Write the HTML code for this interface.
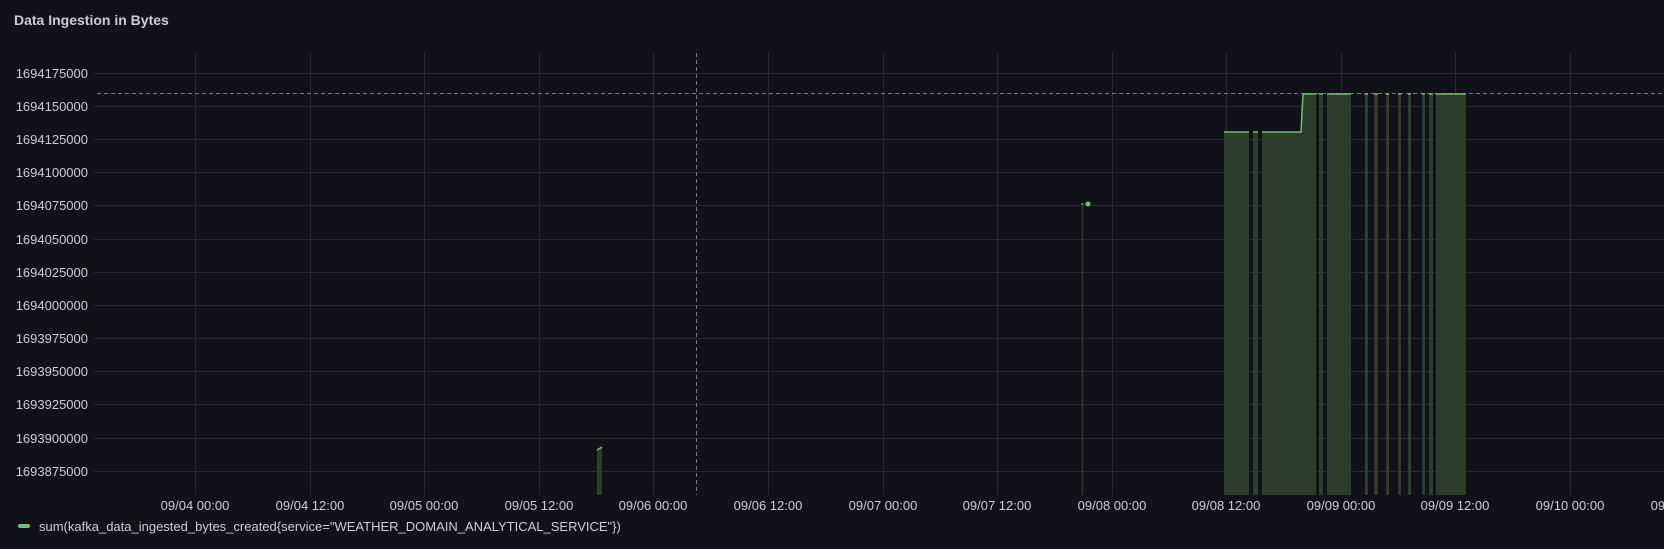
<!DOCTYPE html>
<html><head><style>
body{margin:0;background:#111217;width:1664px;height:549px;overflow:hidden;font-family:"Liberation Sans",sans-serif;}
</style></head><body>
<svg width="1664" height="549" xmlns="http://www.w3.org/2000/svg" style="position:absolute;left:0;top:0">
<text x="14" y="25" fill="#ccccdc" font-size="14" font-weight="bold">Data Ingestion in Bytes</text>
<g stroke="#2a2b30" stroke-width="1">
<line x1="94" x2="1664" y1="73.5" y2="73.5"/><line x1="94" x2="1664" y1="106.5" y2="106.5"/>
<line x1="94" x2="1664" y1="139.5" y2="139.5"/><line x1="94" x2="1664" y1="172.5" y2="172.5"/>
<line x1="94" x2="1664" y1="205.5" y2="205.5"/><line x1="94" x2="1664" y1="239.5" y2="239.5"/>
<line x1="94" x2="1664" y1="272.5" y2="272.5"/><line x1="94" x2="1664" y1="305.5" y2="305.5"/>
<line x1="94" x2="1664" y1="338.5" y2="338.5"/><line x1="94" x2="1664" y1="371.5" y2="371.5"/>
<line x1="94" x2="1664" y1="404.5" y2="404.5"/><line x1="94" x2="1664" y1="438.5" y2="438.5"/>
<line x1="94" x2="1664" y1="471.5" y2="471.5"/>
<line x1="195.5" x2="195.5" y1="53" y2="495"/><line x1="310.5" x2="310.5" y1="53" y2="495"/>
<line x1="424.5" x2="424.5" y1="53" y2="495"/><line x1="539.5" x2="539.5" y1="53" y2="495"/>
<line x1="653.5" x2="653.5" y1="53" y2="495"/><line x1="768.5" x2="768.5" y1="53" y2="495"/>
<line x1="883.5" x2="883.5" y1="53" y2="495"/><line x1="997.5" x2="997.5" y1="53" y2="495"/>
<line x1="1112.5" x2="1112.5" y1="53" y2="495"/><line x1="1226.5" x2="1226.5" y1="53" y2="495"/>
<line x1="1341.5" x2="1341.5" y1="53" y2="495"/><line x1="1455.5" x2="1455.5" y1="53" y2="495"/>
<line x1="1570.5" x2="1570.5" y1="53" y2="495"/>
</g>
<line x1="97" x2="1664" y1="93.5" y2="93.5" stroke="#6e7a90" stroke-dasharray="4,3"/>
<line x1="696.5" x2="696.5" y1="53" y2="495" stroke="#6e7a90" stroke-dasharray="4,3"/>
<g fill="#ccccdc" font-size="13" text-anchor="end">
<text x="88" y="78">1694175000</text><text x="88" y="111">1694150000</text><text x="88" y="144">1694125000</text>
<text x="88" y="177">1694100000</text><text x="88" y="210">1694075000</text><text x="88" y="244">1694050000</text>
<text x="88" y="277">1694025000</text><text x="88" y="310">1694000000</text><text x="88" y="343">1693975000</text>
<text x="88" y="376">1693950000</text><text x="88" y="409">1693925000</text><text x="88" y="443">1693900000</text>
<text x="88" y="476">1693875000</text>
</g>
<g fill="#ccccdc" font-size="13" text-anchor="middle">
<text x="195" y="510">09/04 00:00</text><text x="310" y="510">09/04 12:00</text><text x="424" y="510">09/05 00:00</text>
<text x="539" y="510">09/05 12:00</text><text x="653" y="510">09/06 00:00</text><text x="768" y="510">09/06 12:00</text>
<text x="883" y="510">09/07 00:00</text><text x="997" y="510">09/07 12:00</text><text x="1112" y="510">09/08 00:00</text>
<text x="1226" y="510">09/08 12:00</text><text x="1341" y="510">09/09 00:00</text><text x="1455" y="510">09/09 12:00</text>
<text x="1570" y="510">09/10 00:00</text><text x="1685" y="510">09/10 12:00</text>
</g>
<g fill="#2c3d2b">
<path d="M597 495V450L602 447V495Z"/>
<path d="M1224 495V132H1249V495Z"/>
<path d="M1253 495V132H1258V495Z"/>
<path d="M1262 495V132H1301L1303 94H1316V495Z"/>
<path d="M1319 495V94H1323V495Z"/>
<path d="M1327 495V94H1351V495Z"/>
<path d="M1365 495V94H1368V495Z"/>
<path d="M1374 495V94H1378V495Z"/>
<path d="M1386 495V94H1389V495Z"/>
<path d="M1398 495V94H1401V495Z"/>
<path d="M1408 495V94H1411V495Z"/>
<path d="M1422 495V94H1425V495Z"/>
<path d="M1429 495V94H1433V495Z"/>
<path d="M1436 495V94H1466V495Z"/>
</g>
<g fill="none" stroke="#73bf69" stroke-width="1.5">
<path d="M597 450L602 447"/>
<path d="M1224 132H1249M1253 132H1258M1262 132H1301L1303 94H1316M1319 94H1323M1327 94H1351M1365 94H1368M1374 94H1378M1386 94H1389M1398 94H1401M1408 94H1411M1422 94H1425M1429 94H1433M1436 94H1466"/>
</g>
<line x1="1082.5" x2="1082.5" y1="204" y2="495" stroke="#2c3d2b" stroke-width="1.5"/>
<line x1="1081" x2="1084" y1="204" y2="204" stroke="#73bf69"/>
<circle cx="1088" cy="204" r="2.5" fill="#73bf69"/>
<rect x="18" y="524" width="12" height="4" rx="2" fill="#73bf69"/>
<text x="39" y="531" fill="#ccccdc" font-size="13">sum(kafka_data_ingested_bytes_created{service="WEATHER_DOMAIN_ANALYTICAL_SERVICE"})</text>
</svg>
</body></html>
